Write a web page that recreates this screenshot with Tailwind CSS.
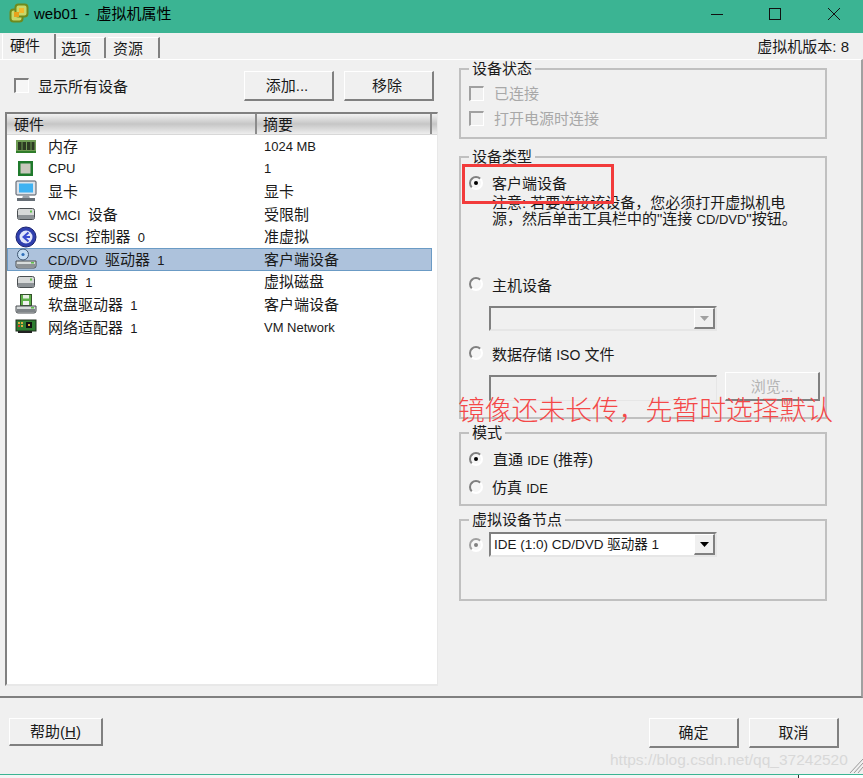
<!DOCTYPE html>
<html lang="zh">
<head>
    <meta charset="UTF-8">
    <title>web01 - 虚拟机属性</title>
    <script src="https://cdn.jsdelivr.net/npm/@tailwindcss/browser@4"></script>
</head>
<body class="relative w-[863px] h-[778px] overflow-hidden bg-[#f0f0f0] text-[15px] leading-none text-[#1a1a1a] font-['Liberation_Sans','Noto_Sans_CJK_SC',sans-serif]">
    <!-- title bar -->
    <header class="h-[33px] bg-[#3bb493] flex items-center">
        <svg class="ml-[9px] mt-[-7px]" width="20" height="20" viewBox="0 0 20 20">
            <rect x="1.5" y="6.5" width="12" height="12" rx="3" fill="#c8d86a" stroke="#6f8a1c" stroke-width="2"/>
            <rect x="6.5" y="1.5" width="12" height="12" rx="3" fill="#c8d86a" stroke="#6f8a1c" stroke-width="2"/>
            <rect x="5" y="9" width="5" height="5" fill="#e9a11c"/>
            <rect x="10" y="5" width="5" height="5" fill="#f4b92a"/>
        </svg>
        <span class="ml-[5px] mt-[-6px] text-black [word-spacing:2.5px]">web01 - 虚拟机属性</span>
        <div class="ml-auto flex items-center mt-[-5px]">
            <svg width="14" height="14" viewBox="0 0 14 14"><path d="M1 7.5H13" stroke="#111" stroke-width="1"/></svg>
            <svg class="ml-[44px]" width="14" height="14" viewBox="0 0 14 14"><rect x="1.5" y="1.5" width="11" height="11" fill="none" stroke="#111"/></svg>
            <svg class="ml-[45px] mr-[22px]" width="14" height="14" viewBox="0 0 14 14"><path d="M1 1L13 13M13 1L1 13" stroke="#111"/></svg>
        </div>
    </header>

    <!-- tabs -->
    <nav class="h-[26px] flex items-end relative">
        <div class="ml-[2px] w-[54px] h-[25px] pl-[7px] pt-[4px] border-r-2 border-r-[#808080] border-l border-l-white">硬件</div>
        <div class="ml-[1px] w-[49px] h-[21px] pl-[4px] pt-[3px] mb-[1px] border-r-2 border-r-[#808080] border-t border-t-white">选项</div>
        <div class="ml-[2px] w-[52px] h-[21px] pl-[5px] pt-[3px] mb-[1px] border-r-2 border-r-[#808080] border-t border-t-white">资源</div>
        <div class="ml-auto mr-[14px] mb-[5px]">虚拟机版本: 8</div>
    </nav>

    <!-- main panel -->
    <main class="h-[639px] flex border-t border-t-white border-b-2 border-b-[#808080] border-r-2 border-r-[#a0a0a0]">
        <section class="w-[459px] shrink-0">
            <div class="flex items-center h-[30px] mt-[11px]">
                <div class="ml-[14px] mt-[-2px] w-[15px] h-[15px] bg-[#f6f6f6] border-t-2 border-l-2 border-t-[#808080] border-l-[#808080] border-b border-r border-b-white border-r-white"></div>
                <span class="ml-[9px]">显示所有设备</span>
                <button class="ml-[116px] w-[90px] h-[30px] pr-[3px] pb-[1px] border border-t-white border-l-white border-r-2 border-b-2 border-r-[#808080] border-b-[#808080]">添加...</button>
                <button class="ml-[10px] w-[90px] h-[30px] pr-[3px] pb-[1px] border border-t-white border-l-white border-r-2 border-b-2 border-r-[#808080] border-b-[#808080]">移除</button>
            </div>

            <!-- hardware list -->
            <div class="ml-[5px] mt-[11px] w-[433px] h-[574px] bg-white border-t-2 border-l-2 border-t-[#808080] border-l-[#808080] border-b-2 border-r border-b-[#e8e8e8] border-r-[#e8e8e8]">
                <div class="h-[21px] flex bg-linear-to-b from-[#f2f2f2] via-[#c6c6c6] to-[#eeeeee] border-b border-b-[#d8d8d8]">
                    <div class="w-[250px] pl-[7px] pt-[3px] border-r-2 border-r-[#8c8c8c]">硬件</div>
                    <div class="w-[175px] pl-[6px] pt-[3px] border-r-2 border-r-[#8c8c8c]">摘要</div>
                </div>
                <ul class="[word-spacing:3px]">
                    <li class="h-[22.6px] w-[425px] flex items-center">
                        <svg class="ml-[8px]" width="22" height="22" viewBox="0 0 22 22"><rect x="1" y="5" width="20" height="13" fill="#6f9c54"/><rect x="3" y="7" width="3.5" height="8" fill="#2c3b22"/><rect x="7.5" y="7" width="3.5" height="8" fill="#2c3b22"/><rect x="12" y="7" width="3.5" height="8" fill="#2c3b22"/><rect x="16.5" y="7" width="3" height="8" fill="#2c3b22"/><rect x="1" y="16" width="20" height="2" fill="#2f7d2a"/></svg>
                        <span class="ml-[11px] w-[216px]">内存</span><span class="text-[13px] [word-spacing:0]">1024 MB</span>
                    </li>
                    <li class="h-[22.6px] w-[425px] flex items-center">
                        <svg class="ml-[8px]" width="22" height="22" viewBox="0 0 22 22"><rect x="3" y="3" width="15" height="15" fill="#1f7a2c"/><rect x="5.5" y="5.5" width="10" height="10" fill="#c8c8bc"/></svg>
                        <span class="ml-[11px] w-[216px] text-[13px]">CPU</span><span class="text-[13px]">1</span>
                    </li>
                    <li class="h-[22.6px] w-[425px] flex items-center">
                        <svg class="ml-[8px]" width="22" height="22" viewBox="0 0 22 22"><rect x="1" y="1" width="20" height="14" rx="1" fill="#dde3ea" stroke="#4d5560"/><rect x="4" y="3.5" width="14" height="9" fill="#3fb2f2"/><path d="M8 15.5h6l1 3H7z" fill="#9aa2aa"/><rect x="2" y="18" width="18" height="3" fill="#666e76"/></svg>
                        <span class="ml-[11px] w-[216px]">显卡</span><span>显卡</span>
                    </li>
                    <li class="h-[22.6px] w-[425px] flex items-center">
                        <svg class="ml-[8px]" width="22" height="22" viewBox="0 0 22 22"><rect x="2.5" y="5.5" width="17" height="11" rx="2" fill="#d6d8d8" stroke="#4a4f52"/><rect x="3" y="12" width="16" height="4" fill="#8d9296"/><rect x="15" y="7.5" width="2" height="2" fill="#5fc24a"/></svg>
                        <span class="ml-[11px] w-[216px]"><span class="text-[13px]">VMCI</span> 设备</span><span>受限制</span>
                    </li>
                    <li class="h-[22.6px] w-[425px] flex items-center">
                        <svg class="ml-[8px]" width="22" height="22" viewBox="0 0 22 22"><circle cx="11" cy="11" r="10" fill="#2f3fae" stroke="#1c2470"/><circle cx="11" cy="11" r="6.5" fill="#e2e6fa"/><path d="M13.5 6.5L8.5 11l5 4.5M9 11h6" fill="none" stroke="#3a4bd0" stroke-width="2"/></svg>
                        <span class="ml-[11px] w-[216px]"><span class="text-[13px]">SCSI</span> 控制器 <span class="text-[13px]">0</span></span><span>准虚拟</span>
                    </li>
                    <li class="h-[22.6px] w-[425px] flex items-center bg-[#adc2dc] border border-[#6b9bc5]">
                        <svg class="ml-[7px]" width="22" height="22" viewBox="0 0 22 22"><circle cx="8" cy="6.5" r="5.5" fill="#c4dcf2" stroke="#3f5570"/><circle cx="8" cy="6.5" r="1.6" fill="#2f6fb8"/><path d="M1 13h20v5a2 2 0 0 1-2 2H3a2 2 0 0 1-2-2z" fill="#d8dcdc" stroke="#4a4f52"/><rect x="2" y="16" width="18" height="3" fill="#8d9296"/><rect x="16" y="14" width="3" height="1.5" fill="#5fc24a"/></svg>
                        <span class="ml-[11px] w-[216px]"><span class="text-[13px]">CD/DVD</span> 驱动器 <span class="text-[13px]">1</span></span><span>客户端设备</span>
                    </li>
                    <li class="h-[22.6px] w-[425px] flex items-center">
                        <svg class="ml-[8px]" width="22" height="22" viewBox="0 0 22 22"><rect x="2.5" y="5.5" width="17" height="11" rx="2" fill="#d6d8d8" stroke="#4a4f52"/><rect x="3" y="12" width="16" height="4" fill="#8d9296"/><rect x="15" y="7.5" width="2" height="2" fill="#5fc24a"/></svg>
                        <span class="ml-[11px] w-[216px]">硬盘 <span class="text-[13px]">1</span></span><span>虚拟磁盘</span>
                    </li>
                    <li class="h-[22.6px] w-[425px] flex items-center">
                        <svg class="ml-[8px]" width="22" height="22" viewBox="0 0 22 22"><rect x="5.5" y="1.5" width="11" height="11" fill="#5fb04a" stroke="#33502a"/><rect x="8" y="2" width="6" height="3.5" fill="#e8efe4"/><rect x="8" y="8" width="6" height="4" fill="#f0f0f0"/><path d="M1 13h20v5a2 2 0 0 1-2 2H3a2 2 0 0 1-2-2z" fill="#d8dcdc" stroke="#4a4f52"/><rect x="2" y="16" width="18" height="3" fill="#7f8488"/><rect x="16" y="14" width="3" height="1.5" fill="#5fc24a"/></svg>
                        <span class="ml-[11px] w-[216px]">软盘驱动器 <span class="text-[13px]">1</span></span><span>客户端设备</span>
                    </li>
                    <li class="h-[22.6px] w-[425px] flex items-center">
                        <svg class="ml-[8px]" width="22" height="22" viewBox="0 0 22 22"><rect x="1" y="4" width="20" height="11" fill="#2e7d32" stroke="#1e2e1e"/><rect x="3" y="6" width="2" height="2" fill="#e0b040"/><rect x="6" y="6" width="2" height="2" fill="#e0b040"/><rect x="3" y="9" width="2" height="2" fill="#d04a2a"/><rect x="6" y="9" width="2" height="2" fill="#e0b040"/><rect x="11" y="6" width="6" height="6" fill="#111"/><rect x="13" y="8" width="2" height="2" fill="#e0b040"/><rect x="3" y="15" width="14" height="2" fill="#222"/></svg>
                        <span class="ml-[11px] w-[216px]">网络适配器 <span class="text-[13px]">1</span></span><span class="text-[13px] [word-spacing:0]">VM Network</span>
                    </li>
                </ul>
            </div>
        </section>

        <!-- right side groups -->
        <section class="w-[368px] pt-[8px]">
            <div class="relative h-[71px] border-2 border-[#c0c0c0] text-[#a8a8a8]">
                <span class="absolute left-[8px] -top-[9px] px-[3px] bg-[#f0f0f0] text-[#1a1a1a]">设备状态</span>
                <div class="flex items-center mt-[15px] ml-[8px]">
                    <div class="w-[15px] h-[15px] border-t-2 border-l-2 border-t-[#a0a0a0] border-l-[#a0a0a0] border-b border-r border-b-white border-r-white"></div>
                    <span class="ml-[10px] mt-[1px]">已连接</span>
                </div>
                <div class="flex items-center mt-[9px] ml-[8px]">
                    <div class="w-[15px] h-[15px] border-t-2 border-l-2 border-t-[#a0a0a0] border-l-[#a0a0a0] border-b border-r border-b-white border-r-white"></div>
                    <span class="ml-[10px] mt-[1px]">打开电源时连接</span>
                </div>
            </div>

            <div class="relative mt-[17px] h-[263px] border-2 border-[#c0c0c0]">
                <span class="absolute left-[8px] -top-[9px] px-[3px] bg-[#f0f0f0]">设备类型</span>
                <div class="flex items-center mt-[16px] ml-[8px]">
                    <div class="w-[14px] h-[14px] rounded-full bg-[#f6f6f6] border-2 border-t-[#808080] border-l-[#808080] border-b-white border-r-white flex items-center justify-center"><div class="w-[4px] h-[4px] rounded-full bg-black"></div></div>
                    <span class="ml-[9px] mt-[2px]">客户端设备</span>
                </div>
                <p class="ml-[31px] mt-[4px] w-[310px] leading-[16px]">注意: 若要连接该设备，您必须打开虚拟机电源，然后单击工具栏中的"连接 <span class="text-[13px]">CD/DVD</span>"按钮。</p>
                <div class="flex items-center mt-[47px] ml-[8px]">
                    <div class="w-[14px] h-[14px] rounded-full bg-[#f6f6f6] border-2 border-t-[#808080] border-l-[#808080] border-b-white border-r-white"></div>
                    <span class="ml-[9px] mt-[3px]">主机设备</span>
                </div>
                <div class="ml-[28px] mt-[13px] w-[228px] h-[25px] flex justify-end bg-[#f0f0f0] border-2 border-t-[#808080] border-l-[#808080] border-b-[#e6e6e6] border-r-[#e6e6e6]">
                    <div class="w-[21px] h-[21px] flex items-center justify-center border border-t-white border-l-white border-r-2 border-b-2 border-r-[#808080] border-b-[#808080]">
                        <svg width="9" height="5" viewBox="0 0 9 5"><path d="M0 0H9L4.5 5Z" fill="#a0a0a0"/></svg>
                    </div>
                </div>
                <div class="flex items-center mt-[13px] ml-[8px]">
                    <div class="w-[14px] h-[14px] rounded-full bg-[#f6f6f6] border-2 border-t-[#808080] border-l-[#808080] border-b-white border-r-white"></div>
                    <span class="ml-[9px] mt-[3px]">数据存储 <span class="text-[14px]">ISO</span> 文件</span>
                </div>
                <div class="flex items-start ml-[28px] mt-[10px]">
                    <div class="mt-[3px] w-[228px] h-[26px] border-t-2 border-l-2 border-t-[#808080] border-l-[#808080] border-b border-r border-b-[#e6e6e6] border-r-[#e6e6e6]"></div>
                    <button class="ml-[8px] w-[95px] h-[29px] text-[#b4b4b4] border border-t-white border-l-white border-r-2 border-b-2 border-r-[#808080] border-b-[#808080]">浏览...</button>
                </div>
            </div>

            <div class="relative mt-[13px] h-[74px] border-2 border-[#c0c0c0]">
                <span class="absolute left-[8px] -top-[9px] px-[3px] bg-[#f0f0f0]">模式</span>
                <div class="flex items-center mt-[16px] ml-[8px]">
                    <div class="w-[14px] h-[14px] rounded-full bg-[#f6f6f6] border-2 border-t-[#808080] border-l-[#808080] border-b-white border-r-white flex items-center justify-center"><div class="w-[4px] h-[4px] rounded-full bg-black"></div></div>
                    <span class="ml-[10px] mt-[2px]">直通 <span class="text-[13px]">IDE</span> (推荐)</span>
                </div>
                <div class="flex items-center mt-[11px] ml-[8px]">
                    <div class="w-[14px] h-[14px] rounded-full bg-[#f6f6f6] border-2 border-t-[#808080] border-l-[#808080] border-b-white border-r-white"></div>
                    <span class="ml-[9px] mt-[2px]">仿真 <span class="text-[13px]">IDE</span></span>
                </div>
            </div>

            <div class="relative mt-[13px] h-[82px] border-2 border-[#c0c0c0]">
                <span class="absolute left-[8px] -top-[9px] px-[3px] bg-[#f0f0f0]">虚拟设备节点</span>
                <div class="flex items-center mt-[11px] ml-[8px]">
                    <div class="w-[14px] h-[14px] rounded-full bg-[#f6f6f6] border-2 border-t-[#a0a0a0] border-l-[#a0a0a0] border-b-white border-r-white flex items-center justify-center"><div class="w-[4px] h-[4px] rounded-full bg-[#808080]"></div></div>
                    <div class="ml-[6px] w-[228px] h-[25px] flex items-center bg-white border-2 border-t-[#808080] border-l-[#808080] border-b-[#e6e6e6] border-r-[#e6e6e6]">
                        <span class="ml-[3px] text-[13.5px]">IDE (1:0) CD/DVD 驱动器 1</span>
                        <div class="ml-auto w-[21px] h-[21px] bg-[#f0f0f0] flex items-center justify-center border border-t-white border-l-white border-r-2 border-b-2 border-r-[#808080] border-b-[#808080]">
                            <svg width="9" height="5" viewBox="0 0 9 5"><path d="M0 0H9L4.5 5Z" fill="#000"/></svg>
                        </div>
                    </div>
                </div>
            </div>
        </section>
    </main>

    <!-- footer buttons -->
    <footer class="flex items-start pt-[20px]">
        <button class="ml-[9px] w-[94px] h-[28px] border border-t-white border-l-white border-r-2 border-b-2 border-r-[#808080] border-b-[#808080]">帮助(<span class="underline">H</span>)</button>
        <button class="ml-auto w-[90px] h-[30px] border border-t-white border-l-white border-r-2 border-b-2 border-r-[#808080] border-b-[#808080]">确定</button>
        <button class="ml-[10px] mr-[24px] w-[90px] h-[30px] border border-t-white border-l-white border-r-2 border-b-2 border-r-[#808080] border-b-[#808080]">取消</button>
    </footer>

    <!-- annotations pasted over the dialog -->
    <div class="absolute left-[462px] top-[164px] w-[152px] h-[40px] border-[3px] border-[#f23b3b]"></div>
    <div class="absolute left-[458px] top-[397px] text-[26.8px] leading-[28px] font-light text-[#f44848] whitespace-nowrap">镜像还未长传，先暂时选择默认</div>
    <div class="absolute left-[610px] top-[752px] text-[15.5px] text-[#d8d8d8] whitespace-nowrap">https://blog.csdn.net/qq_37242520</div>
    <svg class="absolute left-[849px] top-[758px]" width="14" height="15" viewBox="0 0 14 15"><path d="M1 15L14 1M5 15L14 5M9 15L14 9" stroke="#9a9a9a"/></svg>

    <!-- bottom window edge -->
    <div class="absolute left-0 right-0 top-[774px] h-[1px] bg-[#3bb493]"></div>
    <div class="absolute left-0 right-0 top-[775px] h-[3px] bg-[#f4f4f4]"></div>
    <div class="absolute left-[798px] right-0 top-[775px] h-[3px] bg-white border-l border-l-[#333]"></div>
</body>
</html>
